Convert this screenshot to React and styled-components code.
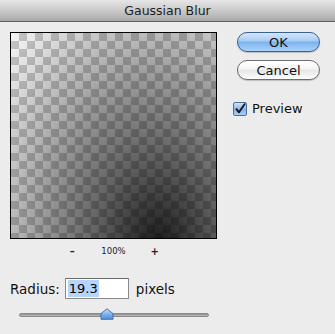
import React from "react";
import styled, { createGlobalStyle } from "styled-components";

const GlobalStyle = createGlobalStyle`
  html, body {
    margin: 0;
    padding: 0;
    background: #ececec;
  }
  body {
    font-family: "DejaVu Sans", "Liberation Sans", sans-serif;
    color: #000;
  }
`;

function App() {
  return (
    <Dialog>
      <GlobalStyle />
      <TitleBar>Gaussian Blur</TitleBar>
      <Body>
        <LeftCol>
          <Preview>
            <Shade />
          </Preview>
          <ZoomRow>
            <ZoomBtn>–</ZoomBtn>
            <ZoomLabel>100%</ZoomLabel>
            <ZoomBtn>+</ZoomBtn>
          </ZoomRow>
        </LeftCol>
        <RightCol>
          <PillButton primary>OK</PillButton>
          <PillButton>Cancel</PillButton>
          <CheckRow>
            <CheckBox>
              <svg width="12" height="12" viewBox="0 0 12 12">
                <path
                  d="M2.5 6.2 L5 9.3 L10.5 1.2"
                  fill="none"
                  stroke="#1a1a1a"
                  strokeWidth="2"
                  strokeLinecap="round"
                  strokeLinejoin="round"
                />
              </svg>
            </CheckBox>
            Preview
          </CheckRow>
        </RightCol>
      </Body>
      <RadiusRow>
        <Label>Radius:</Label>
        <Field>
          <Selected>19.3</Selected>
        </Field>
        <Label>pixels</Label>
      </RadiusRow>
      <SliderRow>
        <Track>
          <Thumb>
            <svg width="14" height="12" viewBox="0 0 14 12">
              <defs>
                <linearGradient id="tg" x1="0" y1="0" x2="0" y2="1">
                  <stop offset="0" stopColor="#cfe3fb" />
                  <stop offset="0.5" stopColor="#7fb2ee" />
                  <stop offset="1" stopColor="#4f8fdc" />
                </linearGradient>
              </defs>
              <path
                d="M1 11.3 L1 5.6 L7 0.8 L13 5.6 L13 11.3 Z"
                fill="url(#tg)"
                stroke="#3d6aa3"
                strokeWidth="0.9"
                strokeLinejoin="round"
              />
            </svg>
          </Thumb>
        </Track>
      </SliderRow>
    </Dialog>
  );
}

export default App;

const Dialog = styled.div`
  width: 335px;
  height: 334px;
  background: #ececec;
  display: flex;
  flex-direction: column;
  overflow: hidden;
`;

const TitleBar = styled.div`
  height: 21px;
  flex: none;
  display: flex;
  align-items: center;
  justify-content: center;
  background: linear-gradient(#e6e6e6, #c4c4c4 60%, #a8a8a8);
  border-bottom: 1px solid #5e5e5e;
  font-size: 12.5px;
  color: #1c1c1c;
`;

const Body = styled.div`
  display: flex;
  padding: 10px 0 0 10px;
`;

const LeftCol = styled.div`
  display: flex;
  flex-direction: column;
  width: 207px;
`;

const Preview = styled.div`
  width: 205px;
  height: 205px;
  border: 1px solid #000;
  position: relative;
  background-color: #fff;
  background-image:
    linear-gradient(45deg, #cdcdcd 25%, transparent 25%, transparent 75%, #cdcdcd 75%),
    linear-gradient(45deg, #cdcdcd 25%, transparent 25%, transparent 75%, #cdcdcd 75%);
  background-size: 16px 16px;
  background-position: 0 0, 8px 8px;
`;

const Shade = styled.div`
  position: absolute;
  inset: 0;
  background: radial-gradient(
    ellipse at 72% 105%,
    rgba(0, 0, 0, 0.9) 0%,
    rgba(0, 0, 0, 0.62) 30%,
    rgba(0, 0, 0, 0.34) 62%,
    rgba(0, 0, 0, 0.14) 85%,
    rgba(0, 0, 0, 0.03) 100%
  );
`;

const ZoomRow = styled.div`
  display: flex;
  justify-content: center;
  align-items: center;
  gap: 24px;
  height: 22px;
  margin-top: 1px;
`;

const ZoomBtn = styled.span`
  font-size: 10px;
  font-weight: bold;
  color: #222;
  width: 10px;
  text-align: center;
`;

const ZoomLabel = styled.span`
  font-size: 8.5px;
  color: #222;
`;

const RightCol = styled.div`
  display: flex;
  flex-direction: column;
  align-items: flex-start;
  padding-left: 20px;
  gap: 8px;
`;

const PillButton = styled.div`
  width: 81px;
  height: 18px;
  border-radius: 10px;
  display: flex;
  align-items: center;
  justify-content: center;
  font-size: 13px;
  color: #111;
  border: 1px solid ${(p) => (p.primary ? "#3a5f94" : "#6d6d6d")};
  background: ${(p) =>
    p.primary
      ? "linear-gradient(#d4e6fb, #a7ccf4 45%, #7cb1ec 50%, #a9d3fb 100%)"
      : "linear-gradient(#ffffff, #f4f4f4 45%, #e6e6e6 50%, #fdfdfd 100%)"};
  box-shadow: 0 1px 1px rgba(0, 0, 0, 0.2);
`;

const CheckRow = styled.div`
  display: flex;
  align-items: center;
  gap: 5px;
  margin-top: 13px;
  margin-left: -4px;
  font-size: 13px;
  color: #111;
`;

const CheckBox = styled.div`
  width: 12px;
  height: 12px;
  border: 1px solid #4e6e9c;
  border-radius: 2px;
  background: linear-gradient(#cfe2fa, #82b4ee 55%, #a9d0f8);
  display: flex;
  align-items: center;
  justify-content: center;
`;

const RadiusRow = styled.div`
  display: flex;
  align-items: center;
  padding: 0 0 0 10px;
  margin-top: 16px;
  gap: 5px;
`;

const Label = styled.span`
  font-size: 13.5px;
  color: #111;
  &:last-child {
    margin-left: 2px;
  }
`;

const Field = styled.div`
  width: 60px;
  height: 19px;
  border: 1px solid #8a8a8a;
  border-top-color: #6a6a6a;
  background: #fff;
  display: flex;
  align-items: center;
  padding-left: 2px;
  font-size: 13px;
`;

const Selected = styled.span`
  background: #b5d4fe;
  padding: 1px 1px;
`;

const SliderRow = styled.div`
  padding: 14px 0 0 19px;
`;

const Track = styled.div`
  width: 190px;
  height: 4px;
  border-radius: 2px;
  background: linear-gradient(#8c8c8c, #bdbdbd);
  border: 1px solid #8a8a8a;
  box-sizing: border-box;
  position: relative;
`;

const Thumb = styled.div`
  position: absolute;
  left: 80px;
  top: -6px;
  width: 14px;
  height: 12px;
  line-height: 0;
`;
